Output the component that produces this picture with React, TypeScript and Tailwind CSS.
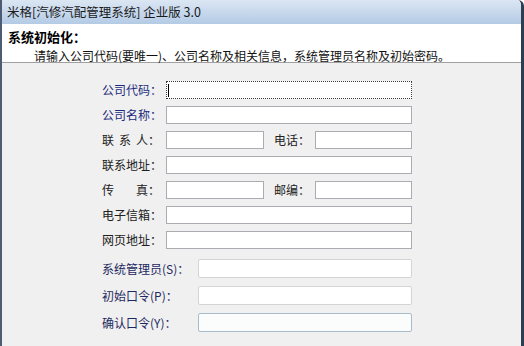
import React from 'react';

const font = { fontFamily: '"Noto Sans CJK SC", "Noto Sans", sans-serif' };

const Box = ({ w, focus }: { w: string; focus?: boolean }) => (
  <div
    className={`${w} h-[18px] bg-white flex items-center ${
      focus ? 'border border-dotted border-[#3a3a3a]' : 'border border-[#a9adb2]'
    }`}
  >
    {focus && <div className="ml-[1px] w-px h-[13px] bg-black" />}
  </div>
);

const Label = ({ text, blue }: { text: string; blue?: boolean }) => (
  <div className={`w-[64px] text-[12px] leading-none ${blue ? 'text-[#1c2a7c]' : 'text-[#202020]'}`}>
    {text}
  </div>
);

const SoftBox = ({ tint }: { tint?: boolean }) => (
  <div
    className={`w-[214px] h-[19px] rounded-[2px] border ${
      tint ? 'border-[#a9bccc] bg-[#fbfdfd]' : 'border-[#d2d5d8] bg-white'
    }`}
  />
);

export default function App() {
  return (
    <div style={font} className="w-[524px] h-[346px] bg-[#f0f0f0] flex flex-col overflow-hidden border-l-2 border-l-[#4d5c74] border-r-[3px] border-r-[#2e3e52] rounded-tr-[6px]">
      <div className="h-[24px] bg-gradient-to-b from-[#dbe6f3] to-[#b4cbe5] flex items-center pl-[5px] text-[12.5px] text-[#1a1a1a]">
        米格[汽修汽配管理系统] 企业版 3.0
      </div>
      <div className="h-[39px] bg-white border-b border-[#a0a0a0] flex flex-col pl-[6px] pt-[6px]">
        <div className="text-[13px] font-bold leading-none text-black">系统初始化：</div>
        <div className="text-[12px] leading-none text-[#111] pl-[26px] mt-[7px]">
          请输入公司代码(要唯一)、公司名称及相关信息，系统管理员名称及初始密码。
        </div>
      </div>
      <div className="flex flex-col pl-[100px] pt-[18px]">
        <div className="flex flex-col gap-[7px]">
          <div className="flex items-center">
            <Label text="公司代码：" blue />
            <Box w="w-[246px]" focus />
          </div>
          <div className="flex items-center">
            <Label text="公司名称：" blue />
            <Box w="w-[246px]" />
          </div>
          <div className="flex items-center">
            <div className="w-[64px] text-[12px] leading-none text-[#202020] flex gap-[5px]">
              <span>联</span>
              <span>系</span>
              <span>人：</span>
            </div>
            <Box w="w-[98px]" />
            <div className="w-[51px] pl-[10px] text-[12px] leading-none text-[#202020]">电话：</div>
            <Box w="w-[97px]" />
          </div>
          <div className="flex items-center">
            <Label text="联系地址：" />
            <Box w="w-[246px]" />
          </div>
          <div className="flex items-center">
            <div className="w-[64px] text-[12px] leading-none text-[#202020] flex">
              <span>传</span>
              <span className="ml-[22px]">真：</span>
            </div>
            <Box w="w-[98px]" />
            <div className="w-[51px] pl-[10px] text-[12px] leading-none text-[#202020]">邮编：</div>
            <Box w="w-[97px]" />
          </div>
          <div className="flex items-center">
            <Label text="电子信箱：" />
            <Box w="w-[246px]" />
          </div>
          <div className="flex items-center">
            <Label text="网页地址：" />
            <Box w="w-[246px]" />
          </div>
        </div>
        <div className="flex flex-col gap-[8px] mt-[10px]">
          <div className="flex items-center">
            <div className="w-[96px] text-[12px] leading-none text-[#1e2860]">系统管理员(S)：</div>
            <SoftBox />
          </div>
          <div className="flex items-center">
            <div className="w-[96px] text-[12px] leading-none text-[#1e2860]">初始口令(P)：</div>
            <SoftBox />
          </div>
          <div className="flex items-center">
            <div className="w-[96px] text-[12px] leading-none text-[#1e2860]">确认口令(Y)：</div>
            <SoftBox tint />
          </div>
        </div>
      </div>
    </div>
  );
}
